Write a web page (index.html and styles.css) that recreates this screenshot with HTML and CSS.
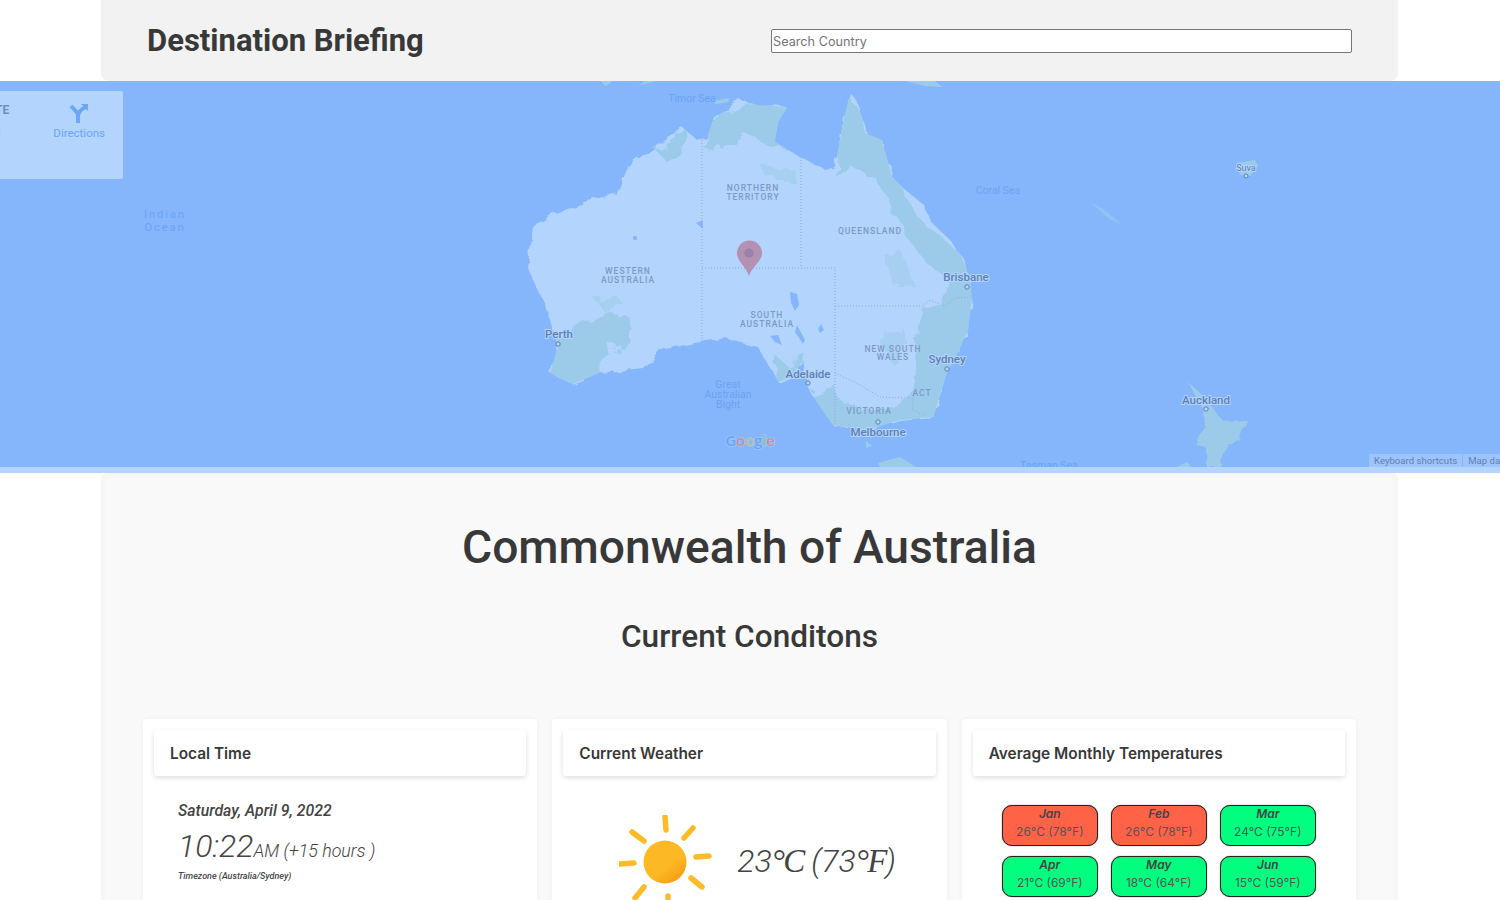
FILE: index.html
```html
<!DOCTYPE html>
<html lang="en">
<head>
    <meta charset="UTF-8">
    <meta name="viewport" content="width=device-width, initial-scale=1.0">
    <title>Destination Briefing</title>
    <link rel="stylesheet" href="styles.css">
</head>
<body>

    <header class="topbar">
        <h1 class="brand">Destination Briefing</h1>
        <input class="search" type="text" placeholder="Search Country">
    </header>

    <section class="map">
        <svg class="map-canvas" viewBox="0 81 1500 386" width="1500" height="386">
            <defs>
                <clipPath id="ausClip">
                    <path d="M682 127 L697 140 L708 135 L712 122 L717 117 L728 108 L740 100 L757 105 L775 106 L787 108 L778 122 L775 142 L800 157 L825 170 L835 167 L843 123 L850 93 L856 100 L862 117 L865 133 L882 140 L892 177 L905 190 L922 203 L932 223 L950 240 L962 257 L970 280 L972 297 L968 330 L958 352 L947 373 L940 395 L933 417 L900 420 L867 430 L833 425 L822 410 L807 385 L803 360 L790 378 L778 382 L770 367 L758 347 L727 338 L700 342 L660 350 L643 368 L600 373 L572 384 L550 373 L558 347 L550 320 L545 303 L527 267 L535 223 L573 205 L617 193 L628 167 L653 147 Z"/>
                </clipPath>
                <filter id="rough" x="-5%" y="-5%" width="110%" height="110%">
                    <feTurbulence type="fractalNoise" baseFrequency="0.07" numOctaves="3" seed="4" result="noise"/>
                    <feDisplacementMap in="SourceGraphic" in2="noise" scale="9"/>
                    <feGaussianBlur stdDeviation="0.5"/>
                </filter>
                <filter id="blotch" x="-10%" y="-10%" width="120%" height="120%">
                    <feTurbulence type="fractalNoise" baseFrequency="0.05" numOctaves="4" seed="9" result="noise"/>
                    <feDisplacementMap in="SourceGraphic" in2="noise" scale="24"/>
                    <feGaussianBlur stdDeviation="0.7"/>
                </filter>
                <linearGradient id="sunFill" x1="0.3" y1="0.3" x2="0.8" y2="1">
                    <stop offset="0.45" stop-color="#fdb924"/>
                    <stop offset="1" stop-color="#f49a12"/>
                </linearGradient>
            </defs>

            <path class="land" filter="url(#rough)" d="M682 127 L697 140 L708 135 L712 122 L717 117 L728 108 L740 100 L757 105 L775 106 L787 108 L778 122 L775 142 L800 157 L825 170 L835 167 L843 123 L850 93 L856 100 L862 117 L865 133 L882 140 L892 177 L905 190 L922 203 L932 223 L950 240 L962 257 L970 280 L972 297 L968 330 L958 352 L947 373 L940 395 L933 417 L900 420 L867 430 L833 425 L822 410 L807 385 L803 360 L790 378 L778 382 L770 367 L758 347 L727 338 L700 342 L660 350 L643 368 L600 373 L572 384 L550 373 L558 347 L550 320 L545 303 L527 267 L535 223 L573 205 L617 193 L628 167 L653 147 Z"/>

            <g clip-path="url(#ausClip)">
                <g filter="url(#blotch)">
                    <path class="green" d="M705 150 L712 108 L795 100 L785 148 L762 142 L748 136 L725 146 Z"/>
                    <path class="green" d="M655 150 L685 120 L690 145 L665 160 Z"/>
                    <path class="green" d="M835 175 L845 85 L870 130 L890 140 L900 190 L925 225 L945 240 L980 270 L980 350 L950 385 L940 425 L910 415 L918 380 L915 340 L925 312 L948 298 L945 275 L925 262 L905 235 L890 200 L868 170 L852 168 Z"/>
                    <path class="green" d="M540 385 L552 345 L562 328 L585 325 L605 312 L635 322 L628 345 L610 352 L595 375 L570 395 Z"/>
                    <path class="green" d="M805 435 L815 395 L835 385 L842 402 L870 408 L915 402 L940 425 L870 445 Z"/>
                    <path class="green" d="M772 352 L790 368 L802 350 L806 388 L778 392 Z"/>
                    <path class="green-soft" d="M595 300 L615 295 L625 305 L605 312 Z"/>
                    <path class="green-soft" d="M880 250 L905 255 L912 280 L893 285 Z"/>
                    <path class="green-soft" d="M880 340 L900 325 L910 345 L892 365 Z"/>
                    <path class="green-soft" d="M760 165 L790 165 L795 180 L770 180 Z"/>
                    <path class="green-soft" d="M730 350 L740 345 L755 345 L760 360 L740 365 Z"/>
                </g>
            </g>

            <!-- lakes -->
            <path class="lake" d="M790 292 L797 294 L799 305 L795 311 L791 303 Z"/>
            <path class="lake" d="M797 325 L805 340 L803 344 L795 332 Z"/>
            <path class="lake" d="M821 324 L824 330 L820 333 L818 329 Z"/>
            <path class="lake" d="M696 223 L703 220 L703 229 Z"/>
            <circle class="lake" cx="635" cy="238" r="2.2"/>
            <path class="lake" d="M770 336 L778 335 L782 345 L775 342 Z"/>

            <!-- state borders -->
            <path class="border" d="M702 140 V339"/>
            <path class="border" d="M801 157 V268"/>
            <path class="border" d="M702 268 H835 V425"/>
            <path class="border" d="M835 306 H922 L930 300 L945 306 L955 298 L972 297"/>
            <path class="border" d="M835 373 L860 385 L880 397 L905 398 L914 395 L912 410 L925 415"/>

            <!-- islands -->
            <path class="green" d="M600 81 L612 81 L606 86 Z"/>
            <path class="green" d="M645 81 L655 81 L638 86 Z"/>
            <path class="green" d="M713 101 L730 98 L728 102 L716 104 Z"/>
            <path class="green" d="M906 81 L935 81 L942 87 L925 86 Z"/>
            <path class="land-edge" d="M1090 202 L1105 210 L1122 225 L1108 218 Z"/>
            <path class="green" d="M1237 163 L1255 160 L1258 166 L1250 176 L1240 175 Z"/>
            <path class="green" filter="url(#rough)" d="M1187 381 L1196 389 L1205 398 L1214 410 L1222 420 L1246 419 L1240 438 L1224 450 L1220 467 L1207 467 L1206 448 L1195 444 L1207 430 L1203 410 Z"/>
            <path class="green" d="M1177 467 L1187 462 L1191 467 Z"/>
            <path class="green" d="M866 441 L872 446 L866 448 Z"/>
            <path class="green" d="M878 463 L900 457 L916 467 L880 467 Z"/>

            <!-- water labels -->
            <text class="label-water" x="692" y="102" text-anchor="middle">Timor Sea</text>
            <text class="label-water" x="998" y="194" text-anchor="middle">Coral Sea</text>
            <text class="label-water" x="1049" y="469" text-anchor="middle">Tasman Sea</text>
            <text class="label-ocean" x="165" y="218" text-anchor="middle">Indian</text>
            <text class="label-ocean" x="165" y="231" text-anchor="middle">Ocean</text>
            <text class="label-water" x="728" y="388" text-anchor="middle">Great</text>
            <text class="label-water" x="728" y="398" text-anchor="middle">Australian</text>
            <text class="label-water" x="728" y="408" text-anchor="middle">Bight</text>

            <!-- states -->
            <text class="label-state" x="753" y="191" text-anchor="middle">NORTHERN</text>
            <text class="label-state" x="753" y="200" text-anchor="middle">TERRITORY</text>
            <text class="label-state" x="870" y="234" text-anchor="middle">QUEENSLAND</text>
            <text class="label-state" x="628" y="274" text-anchor="middle">WESTERN</text>
            <text class="label-state" x="628" y="283" text-anchor="middle">AUSTRALIA</text>
            <text class="label-state" x="767" y="318" text-anchor="middle">SOUTH</text>
            <text class="label-state" x="767" y="327" text-anchor="middle">AUSTRALIA</text>
            <text class="label-state" x="893" y="352" text-anchor="middle">NEW SOUTH</text>
            <text class="label-state" x="893" y="360" text-anchor="middle">WALES</text>
            <text class="label-state" x="922" y="396" text-anchor="middle">ACT</text>
            <text class="label-state" x="869" y="414" text-anchor="middle">VICTORIA</text>

            <!-- cities -->
            <text class="label-city" x="966" y="281" text-anchor="middle">Brisbane</text>
            <circle class="city-dot" cx="967" cy="287" r="2.2"/>
            <text class="label-city" x="559" y="338" text-anchor="middle">Perth</text>
            <circle class="city-dot" cx="558" cy="344" r="2.2"/>
            <text class="label-city" x="808" y="378" text-anchor="middle">Adelaide</text>
            <circle class="city-dot" cx="808" cy="383" r="2.2"/>
            <text class="label-city" x="947" y="363" text-anchor="middle">Sydney</text>
            <circle class="city-dot" cx="947" cy="369" r="2.2"/>
            <text class="label-city" x="878" y="436" text-anchor="middle">Melbourne</text>
            <circle class="city-dot" cx="878" cy="422" r="2.2"/>
            <text class="label-city" x="1206" y="404" text-anchor="middle">Auckland</text>
            <circle class="city-dot" cx="1206" cy="409" r="2.2"/>
            <text class="label-small" x="1246" y="171" text-anchor="middle">Suva</text>
            <circle class="city-dot" cx="1246" cy="176" r="2"/>

            <text class="google" x="750" y="446" text-anchor="middle"><tspan class="g-blue">G</tspan><tspan class="g-red">o</tspan><tspan class="g-yellow">o</tspan><tspan class="g-blue">g</tspan><tspan class="g-green">l</tspan><tspan class="g-red">e</tspan></text>

            <!-- marker -->
            <path class="pin" d="M749 276 C746 266 737 262 737 253 A12.5 12.5 0 0 1 762 253 C762 262 752 266 749 276 Z"/>
            <circle class="pin-dot" cx="749" cy="253" r="4.6"/>
        </svg>

        <div class="place-card">
            <div class="place-name">
                <b>TE</b>
                <span>a</span>
            </div>
            <div class="directions">
                <svg viewBox="0 0 20 20" width="20" height="20">
                    <path d="M9 20 V13 C9 10 7 8 2 3" class="dir-line"/>
                    <path d="M9 14 C9 9 12 6 17 4" class="dir-line"/>
                    <path d="M12 1 H19 V8 Z" class="dir-head"/>
                </svg>
                <span>Directions</span>
            </div>
        </div>

        <div class="attribution">
            <span>Keyboard shortcuts</span>
            <span>Map data ©2022</span>
        </div>
    </section>

    <main class="content">
        <h2 class="country">Commonwealth of Australia</h2>
        <h3 class="conditions">Current Conditons</h3>

        <div class="cards">
            <div class="card">
                <div class="card-head">Local Time</div>
                <div class="time-body">
                    <div class="date">Saturday, April 9, 2022</div>
                    <div class="clock"><span class="clock-big">10:22</span>AM (+15 hours )</div>
                    <div class="zone">Timezone (Australia/Sydney)</div>
                </div>
            </div>

            <div class="card">
                <div class="card-head">Current Weather</div>
                <div class="weather-body">
                    <svg class="sun" viewBox="0 0 100 100" width="100" height="100">
                        <g class="rays">
                            <line x1="46" y1="2" x2="47" y2="15"/>
                            <line x1="74" y1="13" x2="65" y2="23"/>
                            <line x1="90" y1="41" x2="77" y2="42"/>
                            <line x1="83" y1="72" x2="72" y2="63"/>
                            <line x1="49" y1="81" x2="49" y2="95"/>
                            <line x1="25" y1="72" x2="16" y2="83"/>
                            <line x1="1" y1="49" x2="15" y2="48"/>
                            <line x1="13" y1="17" x2="25" y2="26"/>
                        </g>
                        <circle cx="46" cy="47" r="21.5" fill="url(#sunFill)"/>
                    </svg>
                    <div class="temp">23<span class="unit">°C</span> (73<span class="unit">°F</span>)</div>
                </div>
            </div>

            <div class="card">
                <div class="card-head">Average Monthly Temperatures</div>
                <div class="months">
                    <div class="month hot"><b>Jan</b><span>26°C (78°F)</span></div>
                    <div class="month hot"><b>Feb</b><span>26°C (78°F)</span></div>
                    <div class="month mild"><b>Mar</b><span>24°C (75°F)</span></div>
                    <div class="month mild"><b>Apr</b><span>21°C (69°F)</span></div>
                    <div class="month mild"><b>May</b><span>18°C (64°F)</span></div>
                    <div class="month mild"><b>Jun</b><span>15°C (59°F)</span></div>
                </div>
            </div>
        </div>
    </main>

</body>
</html>
```

FILE: styles.css
```css
html, body {
    height: 900px;
    overflow: hidden;
}
body {
    margin: 0;
    background: white;
    color: #333;
    font-family: Inter, Arial, sans-serif;
}

/* top bar */
.topbar {
    display: flex;
    align-items: center;
    justify-content: space-between;
    box-sizing: border-box;
    width: 1297px;
    height: 81px;
    margin: 0 auto 0 101px;
    padding: 0 46px;
    background: #f2f2f2;
    border-radius: 0 0 8px 8px;
}
.brand {
    margin: 0;
    font-family: Roboto, Arial, sans-serif;
    font-size: 31px;
    font-weight: 700;
    color: #383838;
}
.search {
    box-sizing: border-box;
    width: 581px;
    height: 24px;
    padding: 2px 1px 0;
    border: 1px solid #767676;
    border-radius: 2px;
    background: white;
    font-family: Inter, Arial, sans-serif;
    font-size: 12.7px;
}
.search::placeholder {
    color: #757575;
}

/* map */
.map {
    position: relative;
    height: 392px;
    overflow: hidden;
    background: #b3d4fd;
}
.map-canvas {
    display: block;
    background: #85b6fb;
    font-family: Roboto, Arial, sans-serif;
}
.land { fill: #b3d4fd; }
.green { fill: #9ccbe9; }
.green-soft { fill: #a7cff0; }
.land-edge { fill: #93c2f2; }
.lake { fill: #85b6fb; }
.border {
    fill: none;
    stroke: #8ea9d4;
    stroke-width: 1;
    stroke-dasharray: 1 2;
}
.label-water {
    fill: #6ba3f2;
    font-size: 10.5px;
}
.label-ocean {
    fill: #6ba3f2;
    font-size: 11px;
    letter-spacing: 2px;
}
.label-state {
    fill: #7d99c6;
    font-size: 8.5px;
    font-weight: 500;
    letter-spacing: 1px;
}
.label-city {
    fill: #5f7fb2;
    font-size: 11.5px;
    font-weight: 500;
    paint-order: stroke;
    stroke: #b3d4fd;
    stroke-width: 2px;
}
.label-small {
    fill: #5f7fb2;
    font-size: 9px;
    paint-order: stroke;
    stroke: #b3d4fd;
    stroke-width: 2px;
}
.city-dot {
    fill: #b3d4fd;
    stroke: #5f7fb2;
    stroke-width: 1;
}
.google {
    font-family: "Open Sans", Arial, sans-serif;
    font-size: 15px;
    font-weight: 600;
    letter-spacing: -0.2px;
    paint-order: stroke;
    stroke: #9ec6fc;
    stroke-width: 1.5px;
}
.g-blue { fill: #6ba3f2; }
.g-red { fill: #c98f9f; }
.g-yellow { fill: #bdbb8e; }
.g-green { fill: #8cbfa6; }
.pin { fill: #b491b0; }
.pin-dot { fill: #9b80a8; }

.place-card {
    position: absolute;
    left: 0;
    top: 10px;
    display: flex;
    justify-content: space-between;
    box-sizing: border-box;
    width: 123px;
    height: 88px;
    padding: 12px 18px 0 0;
    background: #b3d4fd;
    border-radius: 0 2px 2px 0;
    font-family: Roboto, Arial, sans-serif;
}
.place-name {
    display: flex;
    flex-direction: column;
    gap: 9px;
    margin-left: -5px;
    font-size: 12px;
    color: #6c8fbf;
}
.place-name span {
    font-size: 10px;
}
.directions {
    display: flex;
    flex-direction: column;
    align-items: center;
    gap: 3px;
    font-size: 11.5px;
    color: #6aa6f8;
}
.dir-line {
    fill: none;
    stroke: #6aa6f8;
    stroke-width: 3.8;
}
.dir-head { fill: #6aa6f8; }

.attribution {
    position: absolute;
    left: 1369px;
    top: 373px;
    display: flex;
    gap: 1px;
    height: 13px;
    white-space: nowrap;
    font-family: Roboto, Arial, sans-serif;
    font-size: 9.6px;
    line-height: 13px;
    color: #5f7fb2;
}
.attribution span {
    padding: 0 5px;
    background: #9dc5fc;
}

/* main panel */
.content {
    box-sizing: border-box;
    width: 1297px;
    height: 600px;
    margin-left: 101px;
    padding: 0 42px;
    background: #f9f9f9;
    border-radius: 6px 6px 0 0;
    box-shadow: inset 0 0 10px rgba(0, 0, 0, 0.035);
}
.country {
    margin: 0;
    padding-top: 46px;
    font-family: Roboto, Arial, sans-serif;
    font-size: 46.2px;
    line-height: 56px;
    font-weight: 500;
    text-align: center;
    color: #383838;
}
.conditions {
    margin: 44px 0 0;
    font-family: Roboto, Arial, sans-serif;
    font-size: 31.6px;
    line-height: 36px;
    font-weight: 500;
    text-align: center;
    color: #383838;
}
.cards {
    display: flex;
    gap: 15px;
    margin-top: 64px;
}
.card {
    flex: 1;
    height: 300px;
    padding: 11px;
    background: white;
    border-radius: 4px;
    box-shadow: 0 0 5px rgba(0, 0, 0, 0.05);
}
.card-head {
    height: 46px;
    padding-left: 16px;
    font-size: 15.4px;
    font-weight: 600;
    line-height: 48px;
    color: #383838;
    border-radius: 3px;
    box-shadow: 0 2px 5px rgba(0, 0, 0, 0.13);
}

/* local time */
.time-body {
    padding: 25px 0 0 24px;
    font-family: Roboto, Arial, sans-serif;
    font-style: italic;
    color: #444;
}
.date {
    font-size: 15.8px;
    font-weight: 500;
    line-height: 20px;
}
.clock {
    margin-top: 6px;
    font-size: 17.8px;
    font-weight: 300;
    line-height: 38px;
}
.clock-big {
    font-size: 32px;
}
.zone {
    margin-top: 1px;
    font-size: 9px;
    font-weight: 500;
}

/* weather */
.weather-body {
    display: flex;
    align-items: center;
    padding: 39px 0 0 56px;
}
.sun {
    flex: none;
}
.rays line {
    stroke: #fdbb28;
    stroke-width: 5.5;
    stroke-linecap: round;
}
.temp {
    margin-left: 18px;
    margin-top: -8px;
    font-family: Roboto, "Liberation Serif", serif;
    font-size: 32px;
    font-style: italic;
    font-weight: 300;
    color: #444;
}
.unit {
    font-family: "Liberation Serif", serif;
    font-size: 33px;
    font-weight: 400;
    letter-spacing: -1.7px;
}

/* monthly temps */
.months {
    display: grid;
    grid-template-columns: repeat(3, 96px);
    grid-auto-rows: 41px;
    gap: 10px 13px;
    justify-content: center;
    padding-top: 29px;
}
.month {
    display: flex;
    flex-direction: column;
    align-items: center;
    box-sizing: border-box;
    border: 1px solid #222;
    border-radius: 10px;
    font-size: 12px;
    line-height: 17px;
    color: #555;
    box-shadow: 0 0 1px #333;
}
.month b {
    font-style: italic;
    font-weight: 600;
    line-height: 15px;
    margin-bottom: 2px;
    color: #444;
}
.hot { background: tomato; }
.mild { background: springgreen; }
```
